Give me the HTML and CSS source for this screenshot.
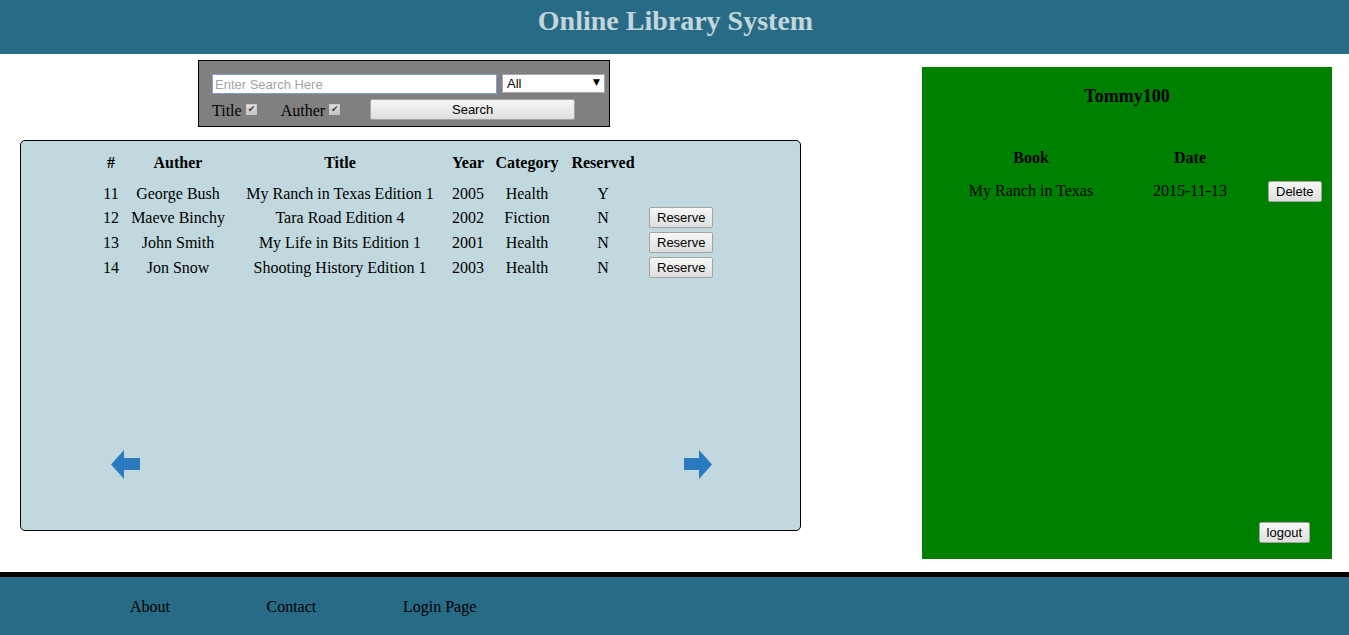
FILE: index.html
```html
<!DOCTYPE html>
<html>
<head>
<meta charset="utf-8">
<title>Online Library System</title>
<link rel="stylesheet" href="styles.css">
</head>
<body>
<header class="top">
  <h1 class="site-title">Online Library System</h1>
</header>
<main class="main">
  <section class="left">
    <form class="search">
      <div class="search-row">
        <input class="search-input" type="text" placeholder="Enter Search Here">
        <div class="select-wrap">
          <select class="search-select"><option>All</option></select>
          <span class="select-arrow">&#9660;</span>
        </div>
      </div>
      <div class="search-row row2">
        <span class="lbl">Title</span>
        <input class="chk" type="checkbox" checked>
        <span class="lbl lbl-auther">Auther</span>
        <input class="chk" type="checkbox" checked>
        <button class="btn btn-search" type="button">Search</button>
      </div>
    </form>
    <div class="books-panel">
      <table class="books">
        <colgroup>
          <col style="width:22px"><col style="width:112px"><col style="width:212px"><col style="width:44px"><col style="width:74px"><col style="width:78px"><col style="width:80px">
        </colgroup>
        <thead>
          <tr><th>#</th><th>Auther</th><th>Title</th><th>Year</th><th>Category</th><th>Reserved</th><th></th></tr>
        </thead>
        <tbody>
          <tr class="short"><td>11</td><td>George Bush</td><td>My Ranch in Texas Edition 1</td><td>2005</td><td>Health</td><td>Y</td><td class="act"></td></tr>
          <tr><td>12</td><td>Maeve Binchy</td><td>Tara Road Edition 4</td><td>2002</td><td>Fiction</td><td>N</td><td class="act"><button class="btn" type="button">Reserve</button></td></tr>
          <tr><td>13</td><td>John Smith</td><td>My Life in Bits Edition 1</td><td>2001</td><td>Health</td><td>N</td><td class="act"><button class="btn" type="button">Reserve</button></td></tr>
          <tr><td>14</td><td>Jon Snow</td><td>Shooting History Edition 1</td><td>2003</td><td>Health</td><td>N</td><td class="act"><button class="btn" type="button">Reserve</button></td></tr>
        </tbody>
      </table>
      <div class="pager">
        <svg class="arrow" width="30" height="31" viewBox="0 0 30 31"><polygon points="0,15.5 13,1 13,9 29,9 29,21 13,21 13,30" fill="#2a7ac0"/></svg>
        <svg class="arrow" width="30" height="31" viewBox="0 0 30 31"><polygon points="29,15.5 16,1 16,9 1,9 1,21 16,21 16,30" fill="#2a7ac0"/></svg>
      </div>
    </div>
  </section>
  <aside class="user-panel">
    <h3 class="user-name">Tommy100</h3>
    <table class="reserved">
      <colgroup><col style="width:182px"><col style="width:136px"><col style="width:70px"></colgroup>
      <thead><tr><th>Book</th><th>Date</th><th></th></tr></thead>
      <tbody>
        <tr><td>My Ranch in Texas</td><td>2015-11-13</td><td class="act"><button class="btn" type="button">Delete</button></td></tr>
      </tbody>
    </table>
    <div class="logout-row"><button class="btn" type="button">logout</button></div>
  </aside>
</main>
<footer class="foot">
  <nav class="foot-nav">
    <a href="#">About</a>
    <a href="#">Contact</a>
    <a href="#">Login Page</a>
  </nav>
</footer>
</body>
</html>
```

FILE: styles.css
```css
html, body {
  margin: 0;
  padding: 0;
}
body {
  font-family: "Liberation Serif", "Times New Roman", serif;
  font-size: 16px;
  color: #000;
  background: #fff;
  width: 1349px;
  height: 635px;
  overflow: hidden;
}
.top {
  height: 54px;
  background: #286b86;
  display: flex;
  justify-content: center;
}
.site-title {
  margin: 0;
  font-size: 28px;
  line-height: 42px;
  font-weight: bold;
  color: #c3d6db;
  padding-left: 2px;
}
.main {
  display: flex;
  justify-content: space-between;
  align-items: flex-start;
  padding: 0 17px 13px 20px;
  height: 518px;
  box-sizing: border-box;
}
.left {
  width: 781px;
  display: flex;
  flex-direction: column;
}
.search {
  margin: 6px 0 0 178px;
  width: 412px;
  box-sizing: border-box;
  background: #808080;
  border: 1px solid #000;
  padding: 13px 4px 6px 13px;
}
.search-row {
  display: flex;
  align-items: center;
}
.row2 {
  margin-top: 5px;
}
.search-input {
  width: 285px;
  height: 20px;
  box-sizing: border-box;
  border: 1px solid #7f9fd8;
  padding: 0 2px;
  font-family: "Liberation Sans", Arial, sans-serif;
  font-size: 13px;
  outline: none;
  margin: 0;
}
.search-input::placeholder {
  color: #a4a4a4;
}
.select-wrap {
  position: relative;
  margin-left: 5px;
  width: 103px;
  height: 19px;
  align-self: flex-start;
}
.search-select {
  appearance: none;
  -webkit-appearance: none;
  width: 103px;
  height: 19px;
  box-sizing: border-box;
  border: 1px solid #a9a9a9;
  border-radius: 0;
  background: #fff;
  font-family: "Liberation Sans", Arial, sans-serif;
  font-size: 13px;
  padding: 0 4px;
  margin: 0;
  color: #000;
}
.select-arrow {
  position: absolute;
  right: 5px;
  top: 3px;
  font-size: 9px;
  font-family: "DejaVu Sans", sans-serif;
  pointer-events: none;
}
.lbl {
  line-height: 18px;
  position: relative;
  top: 1px;
}
.lbl-auther {
  margin-left: 24px;
}
.chk {
  appearance: none;
  -webkit-appearance: none;
  width: 11px;
  height: 11px;
  margin: 0 0 0 4px;
  box-sizing: border-box;
  border: 1px solid #c8c8c8;
  background: linear-gradient(#e0e0e0, #c6c6c6);
  position: relative;
  top: 0;
}
.chk + .lbl {
  margin-left: 24px;
}
.chk::after {
  content: "\2714";
  position: absolute;
  left: 1px;
  top: -1px;
  font-size: 9px;
  line-height: 11px;
  color: #3a3a3a;
  font-family: "DejaVu Sans", sans-serif;
}
.btn {
  font-family: "Liberation Sans", Arial, sans-serif;
  font-size: 13px;
  height: 21px;
  padding: 0 7px;
  margin: 0;
  box-sizing: border-box;
  border: 1px solid #a3a3a3;
  border-radius: 2px;
  background: linear-gradient(#f7f7f7, #dedede);
  color: #000;
  line-height: 19px;
}
.btn-search {
  width: 205px;
  margin-left: 30px;
}
.books-panel {
  margin-top: 13px;
  height: 391px;
  box-sizing: border-box;
  background: #c0d8de;
  border: 1px solid #000;
  border-radius: 5px;
  padding: 12px 0 50px 79px;
  display: flex;
  flex-direction: column;
}
.books, .reserved {
  border-collapse: separate;
  border-spacing: 0;
  table-layout: fixed;
}
.books {
  width: 622px;
}
.books th, .reserved th {
  font-weight: bold;
  padding: 0;
  line-height: 20px;
  vertical-align: top;
  text-align: center;
  white-space: nowrap;
}
.books th {
  height: 30px;
}
.books td, .reserved td {
  padding: 0;
  text-align: center;
  vertical-align: middle;
  white-space: nowrap;
  line-height: 18px;
}
.books td {
  height: 25px;
}
.books .short td {
  height: 22px;
}
.books td.act {
  text-align: left;
  padding-left: 7px;
}
.pager {
  margin-top: auto;
  display: flex;
  justify-content: space-between;
  padding: 0 87px 0 11px;
}
.arrow {
  display: block;
}
.user-panel {
  margin-top: 13px;
  width: 410px;
  height: 492px;
  box-sizing: border-box;
  background: #008000;
  padding: 19px 22px 16px 18px;
  display: flex;
  flex-direction: column;
}
.user-name {
  margin: 0;
  font-size: 18px;
  line-height: 21px;
  text-align: center;
  padding-left: 4px;
}
.reserved {
  margin-top: 41px;
  width: 388px;
}
.reserved th {
  height: 32px;
}
.reserved td {
  height: 22px;
}
.reserved td.act {
  text-align: left;
  padding-left: 10px;
}
.logout-row {
  margin-top: auto;
  display: flex;
  justify-content: flex-end;
}
.foot {
  border-top: 5px solid #000;
  background: #286b86;
  height: 58px;
}
.foot-nav {
  display: flex;
  padding: 21px 0 0 130px;
}
.foot-nav a {
  width: 136.5px;
  color: #000;
  text-decoration: none;
  line-height: 18px;
}
```
